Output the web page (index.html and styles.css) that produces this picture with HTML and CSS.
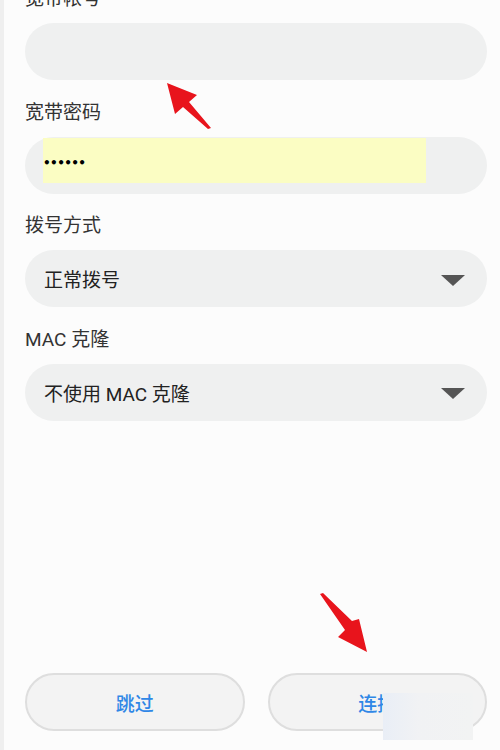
FILE: index.html
```html
<!DOCTYPE html>
<html lang="zh-CN">
<head>
    <meta charset="UTF-8">
    <meta name="viewport" content="width=device-width, initial-scale=1.0">
    <title>上网设置</title>
    <link rel="stylesheet" href="styles.css">
</head>
<body>
    <div class="page">
        <form class="wan-form">
            <div class="field">
                <label>宽带帐号</label>
                <div class="box"></div>
            </div>
            <div class="field">
                <label>宽带密码</label>
                <div class="box box-pwd">
                    <div class="autofill">••••••</div>
                </div>
            </div>
            <div class="field">
                <label>拨号方式</label>
                <div class="box box-select">
                    <span>正常拨号</span>
                    <i class="caret"></i>
                </div>
            </div>
            <div class="field">
                <label>MAC 克隆</label>
                <div class="box box-select">
                    <span>不使用 MAC 克隆</span>
                    <i class="caret"></i>
                </div>
            </div>
        </form>

        <div class="actions">
            <button type="button">跳过</button>
            <button type="button">连接</button>
        </div>

        <svg class="marks" width="500" height="750" viewBox="0 0 500 750">
            <polygon points="167,83 197,95 189,102 211,128 208,129 183,107 175,114" fill="#e8141c"/>
            <polygon points="320,594 323,593 352,621 359,619 367,652 338,637 345,630" fill="#e8141c"/>
        </svg>
        <div class="smudge"></div>
    </div>
</body>
</html>
```

FILE: styles.css
```css
body, form, label, button {margin: 0; padding: 0;}
body {
    background: #fcfcfc;
    font-family: Roboto, "Noto Sans CJK SC", sans-serif;
}

.page {
    position: relative;
    height: 750px;
    overflow: hidden;
    display: flex;
    flex-direction: column;
    border-left: 4px solid #efefef;
    background: #fcfcfc;
}

.wan-form {
    margin-top: -13px;
    padding: 0 13px 0 21px;
}
.field + .field {
    margin-top: 20.5px;
}
.field label {
    display: block;
    font-size: 19px;
    line-height: 24px;
    margin-bottom: 12px;
    color: #333;
}

.box {
    height: 57px;
    border-radius: 29px;
    background: #eff0f0;
    display: flex;
    align-items: center;
    padding: 0 22px 0 19px;
    font-size: 19px;
    color: #222;
}
.box-pwd {
    align-items: flex-start;
    padding-left: 18px;
}
.box-pwd .autofill {
    width: 383px;
    height: 45px;
    margin-top: 1px;
    background: #fbfdc3;
    font-family: "DejaVu Sans", sans-serif;
    font-size: 12px;
    font-weight: bold;
    line-height: 50px;
    letter-spacing: -0.6px;
    color: #000;
}
.box-select {
    justify-content: space-between;
}
.caret {
    width: 0;
    height: 0;
    margin-top: 3px;
    border-left: 12px solid transparent;
    border-right: 12px solid transparent;
    border-top: 11px solid #555;
}

.actions {
    margin-top: auto;
    display: flex;
    gap: 23px;
    padding: 0 13px 19px 21px;
}
.actions button {
    flex: 1;
    height: 58px;
    border: 2px solid #dedede;
    border-radius: 29px;
    background: #f3f3f3;
    font-family: inherit;
    font-size: 19px;
    font-weight: 500;
    color: #2f87e6;
}

.marks {
    position: absolute;
    left: -4px;
    top: 0;
    pointer-events: none;
}
.smudge {
    position: absolute;
    left: 379px;
    top: 693px;
    width: 90px;
    height: 47px;
    background: linear-gradient(90deg, #e9eef6, #f1f2f4 40%, #f2f3f3);
}
```
